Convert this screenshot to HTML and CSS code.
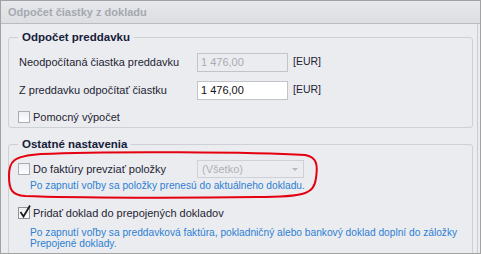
FILE: index.html
```html
<!DOCTYPE html>
<html lang="sk">
<head>
  <meta charset="UTF-8">
  <title>Odpočet čiastky z dokladu</title>
  <link rel="stylesheet" href="styles.css">
</head>
<body>
  <div class="window">
    <div class="title-bar">Odpočet čiastky z dokladu</div>

    <div class="content">
      <fieldset class="group">
        <legend>Odpočet preddavku</legend>

        <div class="row">
          <span class="row-label">Neodpočítaná čiastka preddavku</span>
          <span class="field disabled">1 476,00</span>
          <span class="unit">[EUR]</span>
        </div>

        <div class="row">
          <span class="row-label">Z preddavku odpočítať čiastku</span>
          <span class="field">1 476,00</span>
          <span class="unit">[EUR]</span>
        </div>

        <label class="check">
          <span class="box"></span>
          Pomocný výpočet
        </label>
      </fieldset>

      <fieldset class="group group-other">
        <legend>Ostatné nastavenia</legend>

        <div class="option highlighted">
          <div class="option-line">
            <label class="check">
              <span class="box"></span>
              Do faktúry prevziať položky
            </label>
            <span class="combo">(Všetko)<span class="arrow"></span></span>
          </div>
          <p class="hint">Po zapnutí voľby sa položky prenesú do aktuálneho dokladu.</p>

          <!-- red hand drawn mark -->
          <svg class="mark" width="314" height="50" viewBox="0 0 314 50">
            <path d="M34 3 C 100 0, 250 1, 298 4 C 310 6, 311 14, 309 27 C 307 43, 298 46, 250 46 C 180 47, 70 47, 18 45 C 5 44, 2 39, 2 25 C 2 11, 5 5, 34 3 Z"
                  fill="none" stroke="#e5000f" stroke-width="2"/>
          </svg>
        </div>

        <div class="option">
          <label class="check">
            <span class="box checked">
              <svg width="14" height="15" viewBox="0 0 14 15">
                <path d="M2.5 8 L5.5 12.5 L12 1.5" fill="none" stroke="#1f1f1f" stroke-width="1.8"/>
              </svg>
            </span>
            Pridať doklad do prepojených dokladov
          </label>
          <p class="hint">Po zapnutí voľby sa preddavková faktúra, pokladničný alebo bankový doklad doplní do záložky<br>Prepojené doklady.</p>
        </div>
      </fieldset>
    </div>
  </div>
</body>
</html>
```

FILE: styles.css
```css
body {
  margin: 0;
  font-family: "Liberation Sans", Arial, sans-serif;
  font-size: 11px;
  color: #1e2433;
  background: #fff;
}

.window {
  width: 479px;
  height: 252px;
  border: 1px solid #a2a2a2;
  background: #ebecf0;
  overflow: hidden;
}

.title-bar {
  height: 22px;
  line-height: 22px;
  padding-left: 7px;
  background: linear-gradient(#e6e8eb, #dcdee2);
  border-bottom: 1px solid #b9bcc1;
  color: #a5a9b0;
  font-weight: bold;
}

.content {
  height: 229px;
  padding: 6px 4px 0 7px;
  margin-right: 2px;
  border-right: 1px solid #cbcdd1;
}

.group {
  margin: 0;
  padding: 4px 10px 3px 10px;
  border: 1px solid #cdd0d5;
  border-radius: 3px;
}

.group legend {
  padding: 0 4px;
  margin-left: -1px;
  height: 14px;
  line-height: 14px;
  font-weight: bold;
  font-size: 11.5px;
  color: #16203a;
}

.group-other {
  margin-top: 9px;
  padding-top: 8px;
  padding-bottom: 20px;
}

.row {
  display: flex;
  align-items: center;
  height: 28px;
}

.row-label {
  width: 178px;
}

.field {
  box-sizing: border-box;
  width: 91px;
  height: 19px;
  line-height: 17px;
  padding-left: 3px;
  border: 1px solid #c2c4c8;
  background: #fff;
  color: #111;
}

.field.disabled {
  background: #ebecf0;
  color: #a9abb0;
}

.unit {
  margin-left: 5px;
  font-size: 10.5px;
  position: relative;
  top: -1px;
}

.check {
  display: flex;
  align-items: center;
  gap: 3px;
  height: 14px;
  margin-left: -1px;
}

.group > .check {
  margin-top: 6px;
}

.box {
  width: 10px;
  height: 10px;
  border: 1px solid #a9acb2;
  background: linear-gradient(#eceef1, #ffffff);
  position: relative;
}

.box.checked {
  border-color: #8f9399;
}

.box svg {
  position: absolute;
  left: -1px;
  top: -4px;
}

.option {
  position: relative;
}

.option.highlighted {
  padding-bottom: 14px;
}

.option-line {
  display: flex;
  align-items: center;
  height: 20px;
}

.option-line .check {
  width: 179px;
}

.combo {
  box-sizing: border-box;
  width: 107px;
  height: 18px;
  line-height: 16px;
  padding-left: 4px;
  border: 1px solid #cdd0d5;
  color: #aeb0b5;
  position: relative;
}

.arrow {
  position: absolute;
  right: 5px;
  top: 7px;
  border-left: 3px solid transparent;
  border-right: 3px solid transparent;
  border-top: 3px solid #b4b6ba;
}

.hint {
  margin: 1px 0 0 11px;
  color: #2c80d3;
  font-size: 10.2px;
  line-height: 12px;
  white-space: nowrap;
}

.option:last-child .hint {
  margin-top: 7px;
  line-height: 11px;
}

.mark {
  position: absolute;
  left: -12px;
  top: -8px;
}
```
